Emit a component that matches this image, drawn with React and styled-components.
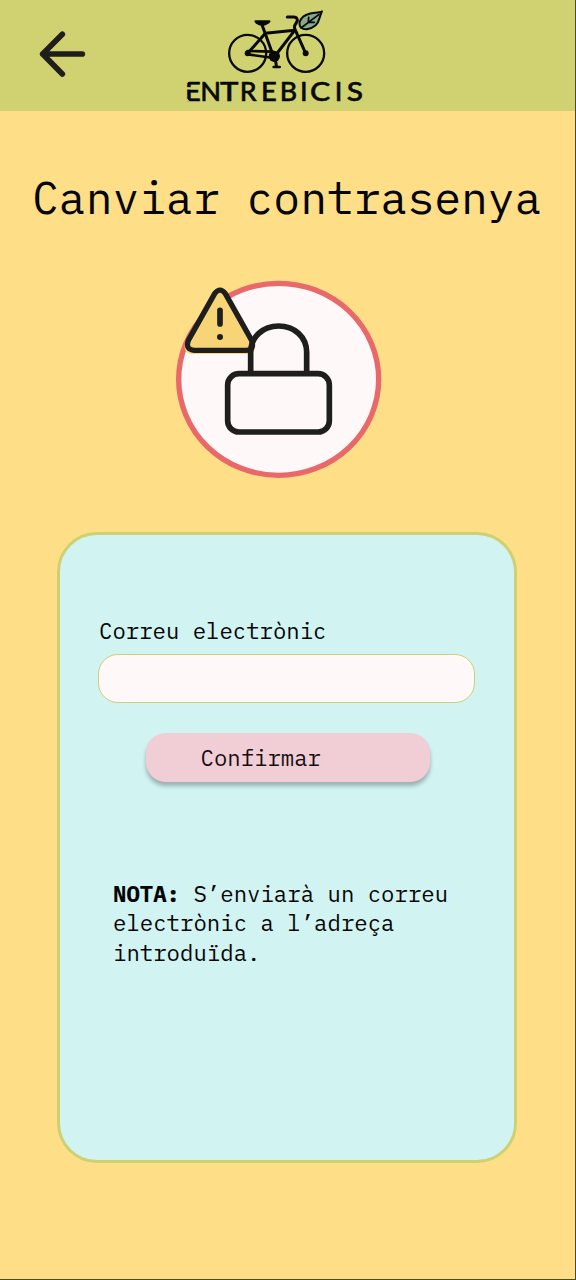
import React from 'react';
import styled, { createGlobalStyle } from 'styled-components';

const GlobalStyle = createGlobalStyle`
  * { box-sizing: border-box; }
  body { margin: 0; background: #fede87; }
`;

const mono = `'IBM Plex Mono', 'Liberation Mono', monospace`;

const Screen = styled.main`
  display: flex;
  flex-direction: column;
  width: 576px;
  height: 1280px;
  overflow: hidden;
  background: #fede87;
  border-right: 1px solid #54481f;
  border-bottom: 1px solid #54481f;
  color: #050505;
  font-family: ${mono};
`;

const Header = styled.header`
  display: flex;
  flex: none;
  height: 111px;
  background: #d0d171;
`;

const BackButton = styled.button`
  width: 90px;
  height: 80px;
  margin: 15px 66px 0 20px;
  padding: 0;
  border: 0;
  background: none;
  svg { display: block; }
`;

const Logo = styled.svg`
  display: block;
  width: 200px;
  height: 111px;
`;

const Title = styled.h1`
  flex: none;
  margin: 56px 0 0 32px;
  height: 60px;
  font-size: 44.7px;
  line-height: 60px;
  font-weight: 400;
  white-space: pre;
`;

const Illustration = styled.svg`
  flex: none;
  display: block;
  width: 230px;
  height: 220px;
  margin: 43px 0 0 165px;
`;

const Card = styled.section`
  flex: none;
  display: flex;
  flex-direction: column;
  width: 460px;
  height: 631px;
  margin: 42px 0 0 57px;
  padding: 81px 39px 0;
  background: #d1f3f1;
  border: 3px solid #cdd172;
  border-radius: 40px;
`;

const Label = styled.label`
  height: 30px;
  font-size: 22.3px;
  line-height: 30px;
`;

const Input = styled.input`
  width: 377px;
  height: 49px;
  margin: 8px 0 0 -1px;
  padding: 0 16px;
  border: 1.5px solid #cdd172;
  border-radius: 20px;
  background: #fef8f8;
  font: 22.3px ${mono};
  outline: none;
`;

const SubmitButton = styled.button`
  width: 284px;
  height: 49px;
  margin: 29.5px 0 0 46.5px;
  padding: 1px 0 0 55px;
  border: 0;
  border-radius: 20px;
  background: #f1cdd5;
  box-shadow: 0 4px 4px rgba(0, 0, 0, 0.27);
  color: #160f11;
  font: 22.3px/46px ${mono};
  text-align: left;
`;

const Note = styled.p`
  width: 350px;
  margin: 97.5px 0 0 14px;
  font-size: 22.35px;
  line-height: 29.3px;
`;

// glyph, x offset, horizontal scale
const letters = [
  ['E', 27, 1.03], ['N', 73, 1.02], ['T', 132, 1.17], ['R', 191, 1], ['E', 255, 1.03],
  ['B', 311, 1], ['I', 372, 1], ['C', 402, 1.14], ['I', 476, 1], ['S', 512, 1.12],
];

function BrandLogo() {
  return (
    <Logo viewBox="0 0 600 333" fill="none" stroke="#090a06" strokeLinecap="round" strokeLinejoin="round">
      <g strokeWidth="7">
        <circle cx="215" cy="160" r="55.5" />
        <circle cx="389" cy="160" r="55.5" />
      </g>
      <g strokeWidth="9">
        <path d="M215 160 L268 100 L356 91 L297 168" />
        <path d="M258 74 L291 165" />
        <path d="M389 160 L357 88 Q353 80 358 73 L363 65 Q367 52 353 51 L334 51" />
        <path d="M215 153 L290 155 M215 163 L292 174" strokeWidth="8" />
        <path d="M297 170 L301 197" />
        <path d="M293 201 L311 201" strokeWidth="8" />
      </g>
      <path d="M239 64 L280 64 Q280 68 266 73 L252 73 Q240 69 239 64Z" fill="#090a06" strokeWidth="7" />
      <circle cx="295" cy="169" r="17" fill="#090a06" stroke="none" />
      <circle cx="215" cy="160" r="9" fill="#090a06" stroke="none" />
      <circle cx="389" cy="160" r="9" fill="#090a06" stroke="none" />
      <path d="M438 34 C426 42 390 34 376 56 C367 68 370 80 376 83 C385 91 405 88 419 76 C432 64 429 52 438 34Z" fill="#87a98c" strokeWidth="6" />
      <path d="M375 84 L429 43 M397 67 L398 52 M397 67 L415 67" strokeWidth="5" />
      <g fill="#090a06" strokeWidth="1.6" fontFamily="Lato, sans-serif" fontSize="80" fontWeight="500">
        {letters.map(([glyph, x, scale]) => (
          <text key={x} transform={`translate(${x} 302) scale(${scale} 1)`}>{glyph}</text>
        ))}
      </g>
      {/* break in the stem of the initial E, and its rounded corners */}
      <path d="M30 265 H47" stroke="#d0d171" strokeWidth="7" strokeLinecap="butt" />
      <path d="M32 240 L32 251 L41 242Z M32 305 L32 295 L41 304Z" fill="#d0d171" stroke="none" />
    </Logo>
  );
}

function LockWarning() {
  return (
    <Illustration viewBox="0 0 690 660" fill="none" stroke="#1f1e1e" strokeLinecap="round" strokeLinejoin="round">
      <ellipse cx="341" cy="328" rx="300" ry="288" fill="#fef8f8" stroke="#e96869" strokeWidth="16" />
      <path d="M145 70 Q165 40 184 70 L264 215 Q274 249 246 249 L84 249 Q55 248 64 217Z" fill="#fcd777" stroke="#fcd777" strokeWidth="6" />
      <path d="M149 71 Q165 50 181 71 L260 211 Q270 241 242 241 L88 241 Q60 239 70 211Z" fill="#f7d475" strokeWidth="16" />
      <path d="M165 121 V162" strokeWidth="17" />
      <circle cx="165" cy="201" r="9" fill="#1f1e1e" stroke="none" />
      <path d="M257 310 V247 C257 200 294 168 341 168 C388 168 425 200 425 247 V310" strokeWidth="17" />
      <rect x="188" y="311" width="305" height="175" rx="34" strokeWidth="17" fill="#fef8f8" />
    </Illustration>
  );
}

export default function App() {
  return (
    <>
      <GlobalStyle />
      <Screen>
        <Header>
          <BackButton aria-label="Enrere">
            <svg width="90" height="80" viewBox="0 0 270 240" fill="none" stroke="#1f1e1b" strokeWidth="17" strokeLinecap="round" strokeLinejoin="round">
              <path d="M127 58 L68 117 L127 177 M68 117 H187" />
            </svg>
          </BackButton>
          <BrandLogo />
        </Header>
        <Title>Canviar contrasenya</Title>
        <LockWarning />
        <Card>
          <Label htmlFor="email">Correu electrònic</Label>
          <Input id="email" type="email" />
          <SubmitButton type="button">Confirmar</SubmitButton>
          <Note><strong>NOTA:</strong> S’enviarà un correu electrònic a l’adreça introduïda.</Note>
        </Card>
      </Screen>
    </>
  );
}
